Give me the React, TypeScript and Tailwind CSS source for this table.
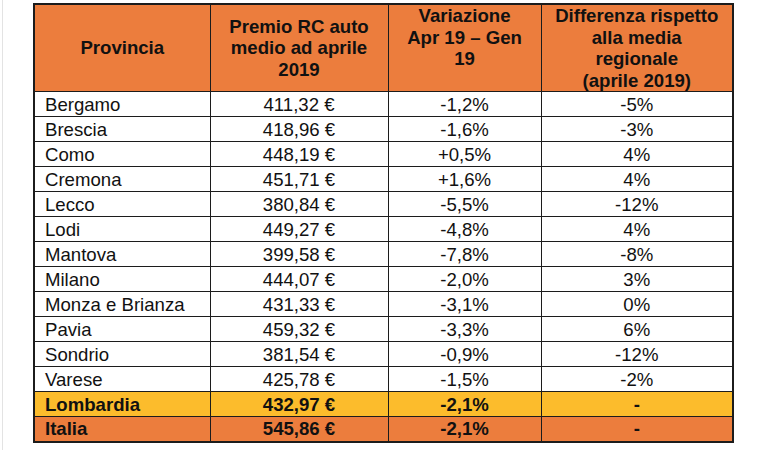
const rows = [
  { name: 'Bergamo', premio: '411,32 €', variazione: '-1,2%', diff: '-5%' },
  { name: 'Brescia', premio: '418,96 €', variazione: '-1,6%', diff: '-3%' },
  { name: 'Como', premio: '448,19 €', variazione: '+0,5%', diff: '4%' },
  { name: 'Cremona', premio: '451,71 €', variazione: '+1,6%', diff: '4%' },
  { name: 'Lecco', premio: '380,84 €', variazione: '-5,5%', diff: '-12%' },
  { name: 'Lodi', premio: '449,27 €', variazione: '-4,8%', diff: '4%' },
  { name: 'Mantova', premio: '399,58 €', variazione: '-7,8%', diff: '-8%' },
  { name: 'Milano', premio: '444,07 €', variazione: '-2,0%', diff: '3%' },
  { name: 'Monza e Brianza', premio: '431,33 €', variazione: '-3,1%', diff: '0%' },
  { name: 'Pavia', premio: '459,32 €', variazione: '-3,3%', diff: '6%' },
  { name: 'Sondrio', premio: '381,54 €', variazione: '-0,9%', diff: '-12%' },
  { name: 'Varese', premio: '425,78 €', variazione: '-1,5%', diff: '-2%' },
];

const cell = 'border border-[#1c1c1c] p-0';

const DataRow = ({ r, bg = 'bg-white', bold = false }: { r: typeof rows[number]; bg?: string; bold?: boolean }) => (
  <tr className={`h-[25px] ${bg} ${bold ? 'font-bold' : ''}`}>
    <td className={`${cell} pl-[10px] pt-[1px] text-left`}>{r.name}</td>
    <td className={`${cell} pt-[1px] text-center`}>{r.premio}</td>
    <td className={`${cell} pt-[1px] text-center`}>{r.variazione}</td>
    <td className={`${cell} pt-[1px] text-center`}>{r.diff}</td>
  </tr>
);

export default function App() {
  return (
    <div className="w-[770px] h-[450px] bg-white pl-[2px] overflow-hidden" style={{ fontFamily: '"Liberation Sans", Arial, sans-serif' }}>
      <div className="h-[450px] border-l border-[#e3e3e3] pl-[30px] pt-[3px]">
        <table className="border-collapse border-2 border-[#1c1c1c] text-[18.6px] leading-[20px] text-[#111] table-fixed w-[699px]">
          <colgroup>
            <col className="w-[176px]" />
            <col className="w-[178px]" />
            <col className="w-[153px]" />
            <col className="w-[192px]" />
          </colgroup>
          <thead>
            <tr className="h-[86px] bg-[#ec7d3d] font-bold leading-[21.5px]">
              <th className={`${cell} font-bold`}>Provincia</th>
              <th className={`${cell} font-bold`}>Premio RC auto<br />medio ad aprile<br />2019</th>
              <th className={`${cell} font-bold pb-[21.5px]`}>Variazione<br />Apr 19 – Gen<br />19</th>
              <th className={`${cell} font-bold`}>Differenza rispetto<br />alla media<br />regionale<br />(aprile 2019)</th>
            </tr>
          </thead>
          <tbody>
            {rows.map(r => (
              <DataRow key={r.name} r={r} />
            ))}
            <DataRow r={{ name: 'Lombardia', premio: '432,97 €', variazione: '-2,1%', diff: '-' }} bg="bg-[#fcbc2c]" bold />
            <DataRow r={{ name: 'Italia', premio: '545,86 €', variazione: '-2,1%', diff: '-' }} bg="bg-[#ec7d3d]" bold />
          </tbody>
        </table>
      </div>
    </div>
  );
}
